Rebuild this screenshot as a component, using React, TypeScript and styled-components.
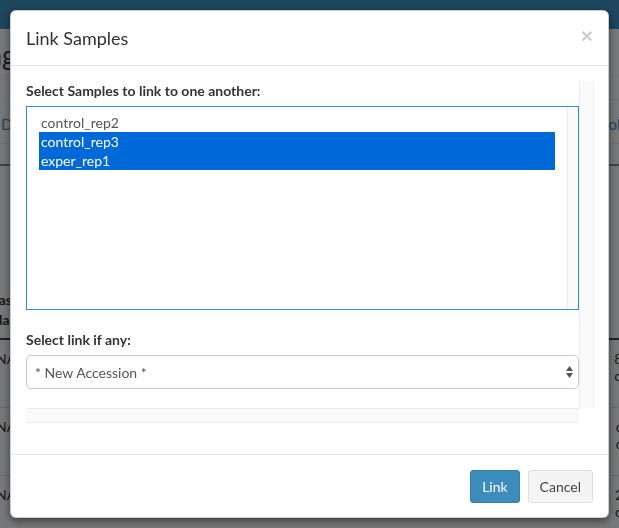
import React from "react";
import styled, { createGlobalStyle } from "styled-components";

const Global = createGlobalStyle`
  html, body { margin: 0; padding: 0; width: 619px; height: 528px; overflow: hidden; }
  body { font-family: Lato, "Liberation Sans", sans-serif; font-size: 14px; background: #ecf0f5; color: #333; }
  * { box-sizing: border-box; }
`;

/* ---------- background page ---------- */
const Page = styled.div`
  width: 619px;
  height: 528px;
  display: flex;
  flex-direction: column;
  overflow: hidden;
`;
const TopBar = styled.header`
  flex: none;
  height: 29px;
  background: #3c8dbc;
`;
const TitleRow = styled.div`
  flex: none;
  height: 43px;
  display: flex;
  align-items: flex-end;
  padding-bottom: 2px;
`;
const PageTitle = styled.h1`
  margin: 0 0 0 -66px;
  font-size: 26px;
  line-height: 30px;
  font-weight: 400;
  color: #333;
`;
const TabsBox = styled.div`
  flex: none;
  height: 72px;
  border-top: 1px solid #f6f6f6;
  border-bottom: 1px solid #dcdcdc;
  display: flex;
  flex-direction: column;
`;
const TabsTop = styled.div`
  height: 27px;
  border-bottom: 1px solid #e4e4e4;
`;
const TabsRow = styled.div`
  flex: 1;
  display: flex;
  justify-content: space-between;
  align-items: center;
  padding-top: 4px;
`;
const TabLink = styled.span<{ $side: "l" | "r" }>`
  color: #3c8dbc;
  font-size: 15px;
  margin: ${(p) => (p.$side === "l" ? "0 0 0 1px" : "0 -8px 0 0")};
`;
const DarkRule = styled.div`
  flex: none;
  margin-top: 20px;
  height: 2px;
  background: #888;
`;
const TableHead = styled.div`
  flex: none;
  height: 174px;
  border-bottom: 2px solid #444;
  display: flex;
  flex-direction: column;
  justify-content: flex-end;
  padding-bottom: 8px;
`;
const HeadCell = styled.div<{ $shift: number }>`
  margin-left: ${(p) => p.$shift}px;
  font-weight: 700;
  line-height: 20px;
  color: #333;
`;
const TableRow = styled.div`
  flex: none;
  height: 68px;
  border-bottom: 1px solid #d4d4d4;
  display: flex;
  justify-content: space-between;
  padding-top: 10px;
`;
const Cell = styled.div<{ $side: "l" | "r" }>`
  line-height: 17px;
  color: #333;
  margin: ${(p) => (p.$side === "l" ? "0 0 0 -4px" : "0 -22px 0 0")};
`;

/* ---------- modal ---------- */
const Backdrop = styled.div`
  position: fixed;
  inset: 0;
  background: rgba(0, 0, 0, 0.5);
`;
const Dialog = styled.div`
  position: fixed;
  left: 10px;
  top: 10px;
  width: 599px;
  height: 508px;
  background: #fff;
  border: 1px solid rgba(0, 0, 0, 0.2);
  border-radius: 6px;
  box-shadow: 0 3px 9px rgba(0, 0, 0, 0.5);
  display: flex;
  flex-direction: column;
  overflow: hidden;
`;
const Header = styled.div`
  flex: none;
  padding: 15px;
  border-bottom: 1px solid #e5e5e5;
  display: flex;
  justify-content: space-between;
  align-items: flex-start;
`;
const Title = styled.h4`
  margin: 0;
  font-size: 18px;
  line-height: 24px;
  font-weight: 400;
  color: #333;
`;
const Close = styled.button`
  border: 0;
  background: none;
  padding: 0;
  margin-top: -1px;
  font-family: "Liberation Sans", Arial, sans-serif;
  font-size: 21px;
  font-weight: 700;
  line-height: 1;
  color: #000;
  opacity: 0.2;
`;
const Body = styled.div`
  flex: 1;
  padding: 15px 15px 31px;
`;
const ScrollFrame = styled.div`
  display: grid;
  grid-template-columns: 1fr 15px;
  grid-template-rows: 327px 15px;
`;
const ScrollContent = styled.div`
  display: flex;
  flex-direction: column;
`;
const VTrack = styled.div`
  background: #fafafa;
  border-left: 1px solid #ececec;
  border-right: 1px solid #f0f0f0;
`;
const HTrack = styled.div`
  background: #fafafa;
  border-top: 1px solid #ececec;
  border-bottom: 1px solid #ececec;
`;
const Label = styled.label<{ $gap?: number }>`
  display: block;
  margin: ${(p) => p.$gap ?? 0}px 0 5px;
  font-weight: 700;
  line-height: 20px;
  color: #333;
`;
const ListBox = styled.div`
  width: 553px;
  height: 204px;
  border: 1px solid #3c8dbc;
  display: grid;
  grid-template-columns: 1fr 11px;
`;
const Options = styled.div`
  padding: 6px 12px;
`;
const Option = styled.div<{ $selected?: boolean }>`
  height: 19px;
  line-height: 19px;
  padding: 0 2px;
  color: ${(p) => (p.$selected ? "#fff" : "#555")};
  background: ${(p) => (p.$selected ? "#0069d9" : "transparent")};
`;
const InnerTrack = styled.div`
  background: #fafafa;
  border-left: 1px solid #ececec;
`;
const Dropdown = styled.div`
  width: 553px;
  height: 34px;
  border: 1px solid #c9c9c9;
  border-radius: 5px;
  padding: 0 4px 0 8px;
  display: flex;
  align-items: center;
  justify-content: space-between;
  color: #555;
`;
const Footer = styled.div`
  flex: none;
  padding: 15px;
  border-top: 1px solid #e5e5e5;
  display: flex;
  justify-content: flex-end;
  gap: 8px;
`;
const Button = styled.button<{ $primary?: boolean }>`
  height: 33px;
  padding: 0 11px;
  font-family: inherit;
  font-size: 14px;
  border-radius: 3px;
  border: 1px solid ${(p) => (p.$primary ? "#367fa9" : "#ddd")};
  background: ${(p) => (p.$primary ? "#3c8dbc" : "#f4f4f4")};
  color: ${(p) => (p.$primary ? "#fff" : "#444")};
`;

const Arrows = () => (
  <svg width="9" height="14" viewBox="0 0 9 14">
    <path d="M4.5 1 L8 6 L1 6 Z" fill="#555" />
    <path d="M1 8 L8 8 L4.5 13 Z" fill="#555" />
  </svg>
);

export default function App() {
  return (
    <>
      <Global />
      <Page>
        <TopBar />
        <TitleRow>
          <PageTitle>Linking</PageTitle>
        </TitleRow>
        <TabsBox>
          <TabsTop />
          <TabsRow>
            <TabLink $side="l">Details</TabLink>
            <TabLink $side="r">Tools</TabLink>
          </TabsRow>
        </TabsBox>
        <DarkRule />
        <TableHead>
          <HeadCell $shift={-14}>Class</HeadCell>
          <HeadCell $shift={-1}>label</HeadCell>
        </TableHead>
        <TableRow>
          <Cell $side="l">NA</Cell>
          <Cell $side="r">8 ctl<br />c ab</Cell>
        </TableRow>
        <TableRow>
          <Cell $side="l">NA</Cell>
          <Cell $side="r">c ctl<br />c ab</Cell>
        </TableRow>
        <TableRow>
          <Cell $side="l">NA</Cell>
          <Cell $side="r">2 ex<br />c ab</Cell>
        </TableRow>
      </Page>
      <Backdrop />
      <Dialog>
        <Header>
          <Title>Link Samples</Title>
          <Close>×</Close>
        </Header>
        <Body>
          <ScrollFrame>
            <ScrollContent>
              <Label>Select Samples to link to one another:</Label>
              <ListBox>
                <Options>
                  <Option>control_rep2</Option>
                  <Option $selected>control_rep3</Option>
                  <Option $selected>exper_rep1</Option>
                </Options>
                <InnerTrack />
              </ListBox>
              <Label $gap={20}>Select link if any:</Label>
              <Dropdown>
                <span>* New Accession *</span>
                <Arrows />
              </Dropdown>
            </ScrollContent>
            <VTrack />
            <HTrack />
          </ScrollFrame>
        </Body>
        <Footer>
          <Button $primary>Link</Button>
          <Button>Cancel</Button>
        </Footer>
      </Dialog>
    </>
  );
}
